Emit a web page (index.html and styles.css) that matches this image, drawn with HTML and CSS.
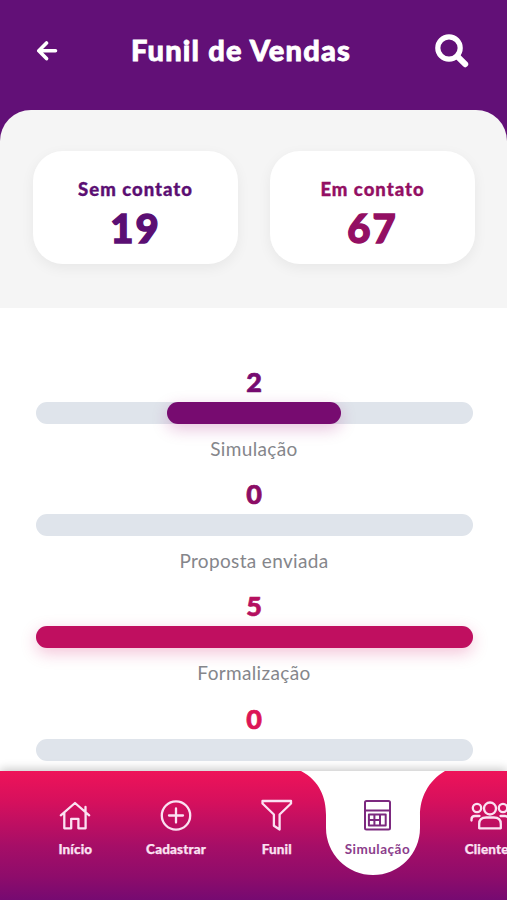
FILE: index.html
```html
<!DOCTYPE html>
<html lang="pt-BR">
<head>
<meta charset="utf-8">
<meta name="viewport" content="width=device-width, initial-scale=1">
<title>Funil de Vendas</title>
<link rel="stylesheet" href="styles.css">
</head>
<body>
<div class="app">
  <header class="header">
    <svg class="back" viewBox="0 0 22 20" width="22" height="20"><path d="M10.500 2 2.800 9.800l7.700 7.800M3.200 9.800H19.500"/></svg>
    <h1 class="title">Funil de Vendas</h1>
    <svg class="search" viewBox="0 0 34 34" width="34" height="34"><circle cx="14" cy="14" r="11.2"/><path class="handle" d="m22.400 22.400 7.800 7.800"/></svg>
  </header>
  <section class="summary">
    <div class="card sem"><span class="card-label">Sem contato</span><strong class="card-value">19</strong></div>
    <div class="card em"><span class="card-label">Em contato</span><strong class="card-value">67</strong></div>
  </section>
  <main class="funnel">
    <div class="stage s1"><strong class="count">2</strong><div class="track"><div class="fill" style="width:40%"></div></div><span class="name">Simulação</span></div>
    <div class="stage s2"><strong class="count">0</strong><div class="track"></div><span class="name">Proposta enviada</span></div>
    <div class="stage s3"><strong class="count">5</strong><div class="track"><div class="fill" style="width:100%"></div></div><span class="name">Formalização</span></div>
    <div class="stage s4"><strong class="count">0</strong><div class="track"></div></div>
  </main>
  <nav class="nav">
    <svg class="notch" viewBox="0 0 144 105" width="144" height="105"><path d="M0 0C19 10 25 27 25 44V57A47 47 0 0 0 119 57V44C119 27 127 10 144 0Z"/></svg>
    <a class="item">
      <svg viewBox="0 0 32 32" width="32" height="32"><path d="M1.800 16.300 16 4l14.200 12.300M5.300 14v15.300h6.900v-9.500h7.200v9.500h7.200V14M26.500 12.500V8"/></svg>
      <span>Início</span>
    </a>
    <a class="item">
      <svg viewBox="0 0 32 32" width="32" height="32"><circle cx="16" cy="16.500" r="14.200"/><path d="M16 9.500v14M9 16.500h14"/></svg>
      <span>Cadastrar</span>
    </a>
    <a class="item">
      <svg viewBox="0 0 32 32" width="32" height="32"><path d="M1.500 2h28.500v2.500L18.600 15.500v15l-5.700-3.700V15.500L1.500 4.500z"/></svg>
      <span>Funil</span>
    </a>
    <a class="item active">
      <svg viewBox="0 0 32 32" width="32" height="32"><rect x="4" y="2" width="25" height="28.500" rx="1.500"/><path d="M4 11.500h25M7.900 15.500h16.800v11H7.900zM13.400 15.500v11M19 15.500v11M7.900 21H19"/></svg>
      <span>Simulação</span>
    </a>
    <a class="item wide">
      <svg viewBox="0 0 40 32" width="40" height="32"><circle cx="20" cy="9.500" r="6"/><circle cx="7" cy="9" r="4.200"/><circle cx="33" cy="9" r="4.200"/><path d="M9.200 29.300V25q0-6.500 7-6.500h7.600q7 0 7 6.500v4.300zM1.500 21.500v-1q0-3.500 3.500-3.500h4.500M38.500 21.500v-1q0-3.500-3.500-3.500h-4.500"/></svg>
      <span>Clientes</span>
    </a>
  </nav>
</div>
</body>
</html>
```
FILE: styles.css
```css
* { box-sizing: border-box; }
body { margin: 0; font-family: Lato, "Liberation Sans", sans-serif; }
.app {
  width: 507px;
  height: 900px;
  overflow: hidden;
  display: flex;
  flex-direction: column;
  background: linear-gradient(#621077 0 180px, #fff 180px);
}
.header {
  height: 110px;
  flex: none;
  display: flex;
  align-items: center;
  padding: 0 38px 8px 36px;
}
.header svg { flex: none; fill: none; stroke: #fff; stroke-linecap: round; stroke-linejoin: round; }
.back { stroke-width: 3.600px; }
.search { stroke-width: 5.200px; }
.handle { stroke-width: 6px; }
.title {
  flex: 1;
  margin: 0 0 2px;
  padding-right: 11px;
  text-align: center;
  font-size: 29px;
  font-weight: 900;
  line-height: 34px;
  color: #fff;
  letter-spacing: 1.200px;
  -webkit-text-stroke: .8px currentColor;
}
.summary {
  flex: none;
  height: 198px;
  display: flex;
  justify-content: space-between;
  padding: 41px 32px 0 33px;
  background: #f5f5f5;
  border-radius: 31px 31px 0 0;
}
.card {
  width: 205px;
  height: 113px;
  padding-top: 26px;
  display: flex;
  flex-direction: column;
  align-items: center;
  background: #fff;
  border-radius: 30px;
  box-shadow: 0 4px 14px rgba(0, 0, 0, .06);
}
.card-label { font-size: 18.500px; font-weight: 900; line-height: 24px; letter-spacing: 1px; -webkit-text-stroke: .35px currentColor; }
.card-value { font-size: 40px; font-weight: 900; line-height: 48px; letter-spacing: 2px; margin-top: 3px; -webkit-text-stroke: 1.400px currentColor; }
.sem { color: #5b0f73; }
.em { color: #930f63; }
.funnel {
  flex: 1;
  min-height: 0;
  overflow: hidden;
  padding: 58px 35px 0 36px;
  background: #fff;
}
.stage { height: 112.200px; display: flex; flex-direction: column; align-items: center; }
.count { font-size: 27px; line-height: 32px; font-weight: 900; -webkit-text-stroke: .7px currentColor; }
.track {
  width: 437px;
  height: 22px;
  flex: none;
  margin-top: 4px;
  display: flex;
  justify-content: center;
  border-radius: 11px;
  background: #dfe4eb;
}
.fill { height: 22px; border-radius: 11px; }
.name { margin-top: 12px; font-size: 19px; line-height: 26px; color: #85868b; letter-spacing: .35px; }
.s1 .count { color: #760b70; }
.s1 .fill { background: #770b70; box-shadow: 0 5px 16px rgba(160, 15, 120, .25); }
.s2 .count { color: #8b0d65; }
.s3 .count { color: #b51060; }
.s3 .fill { background: #c00f60; box-shadow: 0 5px 16px rgba(210, 15, 100, .25); }
.s4 .count { color: #dc1556; }
.nav {
  position: relative;
  flex: none;
  height: 129px;
  display: flex;
  padding: 28px 0 0 25px;
  background: linear-gradient(#ee1359, #d6105d 24%, #a60e67 58%, #8e0c6b 82%, #760a71);
  box-shadow: 0 -2px 9px rgba(0, 0, 0, .22);
}
.notch { position: absolute; left: 301px; top: 0; fill: #fff; }
.item {
  position: relative;
  width: 100.700px;
  flex: none;
  display: flex;
  flex-direction: column;
  align-items: center;
  color: #fbe1f2;
  font-size: 13.500px;
  font-weight: 900;
  line-height: 18px;
  letter-spacing: .15px;
  -webkit-text-stroke: .25px currentColor;
}
.item svg { fill: none; stroke: currentColor; stroke-width: 2.300px; stroke-linejoin: round; stroke-linecap: round; }
.item span { margin-top: 9px; }
.active { color: #8b3d8b; font-weight: 700; letter-spacing: .5px; -webkit-text-stroke: 0; }
.active svg { stroke: #7c297f; stroke-width: 2px; }
.wide { width: 124px; }
```
